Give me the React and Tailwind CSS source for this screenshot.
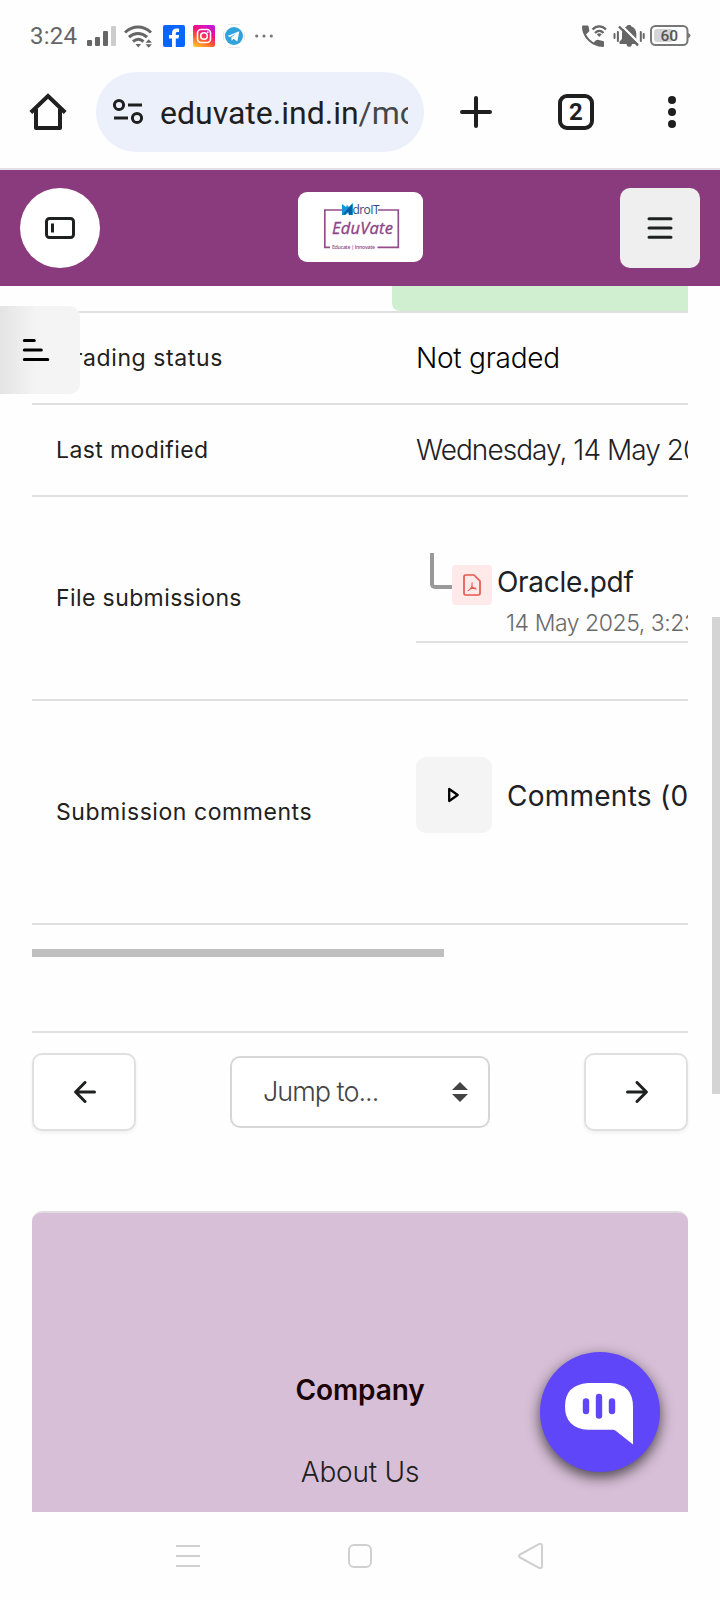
import React from "react";

const sans = "font-[Inter,'Liberation_Sans',sans-serif]";

function StatusBar() {
  return (
    <div className="flex h-[72px] shrink-0 items-center pl-[30px] pr-[29px] text-[#666]">
      <span className="w-[57px] font-[Roboto,sans-serif] text-[24px] leading-[28px] tracking-[0.2px]">3:24</span>
      <svg width="29" height="20" viewBox="0 0 29 20" fill="#666">
        <rect x="0" y="14" width="5" height="6" rx="1" />
        <rect x="8" y="11" width="5" height="9" rx="1" />
        <rect x="16" y="5" width="5" height="15" rx="1" />
        <rect x="24" y="0" width="5" height="20" rx="1" fill="#ccc" />
      </svg>
      <svg className="ml-2" width="29" height="23" viewBox="0 0 29 23" fill="none" stroke="#666" strokeWidth="3">
        <path d="M1 7.500C9 .2 19 .2 27 7.500" />
        <path d="M5 12.200c5.500-5 12.500-5 18 0" />
        <path d="M9 16.500c3.500-3 7-3 10.500 0" />
        <path d="M11.500 19h5.500l-2.700 3.500z" fill="#666" stroke="none" />
        <path d="M21.500 17.800l3.200-3.600 3.200 3.600zM21.500 19.300h6.400l-3.200 3.500z" fill="#666" stroke="none" />
      </svg>
      <svg className="ml-[10px]" width="22" height="22" viewBox="0 0 22 22">
        <rect width="22" height="22" rx="2" fill="#0866ff" />
        <path d="M9 22v-8.500H6V10h3V8.200C9 5 10.800 3.500 13.600 3.500c.9 0 1.800.1 2.500.3v3.100h-1.600c-1.300 0-1.700.5-1.700 1.500V10h3.300l-.6 3.500h-2.700V22z" fill="#fff" />
      </svg>
      <svg className="ml-2" width="22" height="22" viewBox="0 0 22 22" fill="none" stroke="#fff" strokeWidth="1.600">
        <defs>
          <linearGradient id="ig" x1="0.200" y1="1" x2="0.700" y2="0">
            <stop offset="0" stopColor="#ffc12e" />
            <stop offset="0.350" stopColor="#ff5a2c" />
            <stop offset="0.650" stopColor="#f4127f" />
            <stop offset="1" stopColor="#c814d8" />
          </linearGradient>
        </defs>
        <rect width="22" height="22" rx="2" fill="url(#ig)" stroke="none" />
        <rect x="4.500" y="4.500" width="13" height="13" rx="3.500" />
        <circle cx="11" cy="11" r="3.300" />
        <circle cx="14.800" cy="7.200" r=".9" fill="#fff" stroke="none" />
      </svg>
      <svg className="ml-2" width="22" height="24" viewBox="0 0 22 24">
        <path d="M5 .5h12M5 23.500h12M.5 8v8M21.500 8v8" stroke="#e8e8e8" strokeWidth="1" />
        <circle cx="11" cy="12" r="9" fill="#30a3dc" />
        <path d="M4.500 12l11.800-4.800-2 10.300-3.700-2.700-1.900 1.900-.4-3.200 5-4.300-6.200 3.800z" fill="#fff" />
      </svg>
      <svg className="ml-[10px]" width="18" height="6" viewBox="0 0 18 6" fill="#777">
        <circle cx="1.700" cy="3" r="1.600" />
        <circle cx="9" cy="3" r="1.600" />
        <circle cx="16.300" cy="3" r="1.600" />
      </svg>
      <svg className="ml-auto" width="26" height="24" viewBox="0 0 26 24" fill="none" stroke="#666" strokeWidth="2.200">
        <path d="M1 2.500Q1 1.500 2 1.500h4.500q1 0 1.100 1l.7 4q.1.700-.5 1.300L5 10.500q2.800 5.200 7.500 8L15.300 16q.6-.5 1.400-.3l5.300 1.200q1 .2 1 1.100v4q0 1-1 1C10 22.500 1 13 1 2.500z" fill="#666" stroke="none" />
        <path d="M11.500 5.500c4-4.200 9.500-4.200 13.500 0M14 9c2.700-2.800 6-2.800 8.500 0" />
        <path d="M15.800 10.200c1.700-1.200 3.200-1.200 4.900 0l-2.500 2.700z" fill="#666" stroke="none" />
      </svg>
      <svg className="ml-[6px]" width="32" height="24" viewBox="0 0 32 24">
        <path d="M6.500 20v-2.500L9 15V9.500c0-4 2-6 4.500-7C14.500.6 17.500.6 18.500 2.500c3 1 4.800 3.700 4.800 7V15l2.700 2.500V20h-7c-.5 3.800-5 3.800-5.500 0z" fill="#666" />
        <path d="M8.500 1.500l19 19" stroke="#fefefe" strokeWidth="2.400" />
        <path d="M6 2.500l19 19" stroke="#666" strokeWidth="2.400" />
        <path d="M1.500 10v4M4.900 8v9M27.800 8v9M30.700 10v4" stroke="#666" strokeWidth="2" strokeLinecap="round" />
      </svg>
      <svg className="ml-[5px]" width="41" height="22" viewBox="0 0 41 22">
        <rect x="4" y="4" width="19" height="13" rx="3" fill="#d5d5d5" />
        <rect x="1" y="1" width="36.500" height="19" rx="4.500" fill="none" stroke="#777" strokeWidth="2" />
        <path d="M38 8q2.500.5 2.500 2.500T38 13z" fill="#777" />
        <text x="19.300" y="16" textAnchor="middle" fontFamily="Roboto, sans-serif" fontSize="15.500" fontWeight="500" fill="#555">60</text>
      </svg>
    </div>
  );
}

function BrowserBar() {
  return (
    <div className="flex h-[98px] shrink-0 items-start border-b-2 border-[#e5dee4] pl-[28px]">
      <svg className="mt-5" width="40" height="40" viewBox="0 0 40 40" fill="none" stroke="#1f1f1f" strokeWidth="4">
        <path d="M8 17v19h24V17" strokeLinejoin="round" />
        <path d="M2.800 20.500L20 4l17.200 16.500" />
      </svg>
      <div className="ml-[28px] flex h-20 w-[328px] items-center rounded-full bg-[#ecf0fa] pl-4 pr-4">
        <svg className="shrink-0" width="32" height="28" viewBox="0 0 32 28" fill="none" stroke="#1f1f1f" strokeWidth="3">
          <circle cx="7" cy="7" r="4.600" />
          <path d="M16 7h14M2 20h14" />
          <circle cx="25" cy="20" r="4.600" />
        </svg>
        <div className="ml-4 overflow-hidden whitespace-nowrap font-[Roboto,sans-serif] text-[32px] leading-[44px] text-[#1f1f1f]">
          <span className="relative top-px">eduvate.ind.in<span className="text-[#474747]">/mod</span></span>
        </div>
      </div>
      <svg className="ml-[36px] mt-6" width="32" height="32" viewBox="0 0 32 32" stroke="#1f1f1f" strokeWidth="4" strokeLinecap="round">
        <path d="M16 2v28M2 16h28" />
      </svg>
      <div className="ml-[66px] mt-[22px] flex size-9 items-center justify-center rounded-[9px] border-4 border-[#1f1f1f] font-[Roboto,sans-serif] text-[24px] font-bold leading-none text-[#1f1f1f]">2</div>
      <svg className="ml-[74px] mt-6" width="8" height="32" viewBox="0 0 8 32" fill="#1f1f1f">
        <circle cx="4" cy="4" r="4" />
        <circle cx="4" cy="16" r="4" />
        <circle cx="4" cy="28" r="4" />
      </svg>
    </div>
  );
}

function Logo() {
  return (
    <svg width="125" height="70" viewBox="0 0 125 70">
      <path d="M45 18H26.800v37.300h5.200M80 18h20.300v37.300H79.500" fill="none" stroke="#944d8b" strokeWidth="1.700" />
      <path d="M44 12l4 3 1-2 2 2 4-4v12h-4l-1-2-3 2h-3z" fill="#1296d8" />
      <path d="M45 22l9-10v11h-3v-3h-2l-2 3z" fill="#0860a4" />
      <text x="54.500" y="22.300" fontFamily="Open Sans, sans-serif" fontSize="12" fill="#34477c" textLength="27">droIT</text>
      <text x="34" y="41.500" fontFamily="Open Sans, sans-serif" fontStyle="italic" fontSize="16.500" fill="#8f4587" stroke="#8f4587" strokeWidth=".35" textLength="61">EduVate</text>
      <text x="34" y="57" fontFamily="Open Sans, sans-serif" fontWeight="600" fontSize="5.300" fill="#944d8b" textLength="43">Educate | Innovate</text>
    </svg>
  );
}

function SiteHeader() {
  return (
    <header className="flex h-[116px] shrink-0 justify-between bg-[#8a3b7e] px-5 pt-[18px]">
      <button className="flex size-20 items-center justify-center rounded-full bg-white">
        <svg width="30" height="22" viewBox="0 0 30 22" fill="none" stroke="#1f2120" strokeWidth="3">
          <rect x="1.500" y="1.500" width="27" height="19" rx="3" />
          <path d="M7.500 6.500v9" />
        </svg>
      </button>
      <div className="mt-1 h-[70px] w-[125px] rounded-[9px] bg-white">
        <Logo />
      </div>
      <button className="flex size-20 items-center justify-center rounded-[10px] bg-[#efefef]">
        <svg width="26" height="22" viewBox="0 0 26 22" stroke="#1f2120" strokeWidth="3" strokeLinecap="round">
          <path d="M2 1.700h22M2 11h22M2 20.300h22" />
        </svg>
      </button>
    </header>
  );
}

function Row({ label, height, tracking, children }) {
  return (
    <div className={`flex border-b-2 border-[#e0e0e0] ${height}`}>
      <div className={`flex w-[384px] shrink-0 items-center whitespace-nowrap pl-6 text-[23px] text-[#1f2120] ${tracking}`}>{label}</div>
      <div className="flex min-w-0 flex-1 flex-col justify-center overflow-hidden whitespace-nowrap text-[28px] text-[#1d2125]">{children}</div>
    </div>
  );
}

function SubmissionTable() {
  return (
    <section className="flex flex-col">
      <div className="flex h-[27px] justify-end border-b-2 border-[#e0e0e0]">
        <div className="w-[296px] rounded-bl-lg bg-[#d0eed0]" />
      </div>
      <Row label="Grading status" height="h-[92px]" tracking="tracking-[0.6px]">
        <span className="font-light tracking-[-0.25px] text-black">Not graded</span>
      </Row>
      <Row label="Last modified" height="h-[92px]" tracking="tracking-[0.4px]">
        <span className="font-light tracking-[-0.95px]">Wednesday, 14 May 2025, 3:23 PM</span>
      </Row>
      <Row label="File submissions" height="h-[204px]" tracking="tracking-[0.4px]">
        <div className="flex h-[90px] border-b-2 border-[#e0e0e0]">
          <div className="ml-[14px] h-9 w-[22px] shrink-0 rounded-bl-[5px] border-b-4 border-l-4 border-[#999]" />
          <div className="mt-3 flex size-10 shrink-0 items-center justify-center rounded bg-[#ffe9e9]">
            <svg width="18" height="22" viewBox="0 0 18 22" fill="none" stroke="#e4584f" strokeWidth="1.700" strokeLinejoin="round">
              <path d="M2.500 1h8.500L17 7v12.500Q17 21 15.500 21h-13Q1 21 1 19.500v-17Q1 1 2.500 1z" />
              <path d="M9 8.500q.8 3-1.500 6-1.500 2-2.800 2.200M8.600 11.500q1.200 3.300 5 3.500M6.500 15.200q3-1.500 6.500-1" strokeWidth="1.100" />
            </svg>
          </div>
          <div className="ml-[5px] flex flex-col">
            <span className="mt-[11px] leading-[36px] tracking-[-0.3px]">Oracle.pdf</span>
            <span className="ml-[9px] mt-[7px] text-[23px] font-light leading-[32px] tracking-[-0.45px] text-[#6a6a6a]">14 May 2025, 3:23 PM</span>
          </div>
        </div>
      </Row>
      <Row label="Submission comments" height="h-[224px]" tracking="tracking-[0.56px]">
        <div className="mb-[34px] flex items-center">
          <div className="flex size-[76px] shrink-0 items-center justify-center rounded-[10px] bg-[#f4f4f4]">
            <svg width="12" height="16" viewBox="0 0 12 16" fill="none" stroke="#000" strokeWidth="2.300" strokeLinejoin="round">
              <path d="M1.200 2v12l8.500-6z" />
            </svg>
          </div>
          <span className="ml-[15px] pt-0.5 tracking-[0.25px]">Comments (0)</span>
        </div>
      </Row>
      <div className="mt-6 h-2 w-[412px] bg-[#bfbfbf]" />
    </section>
  );
}

function Arrow({ flip }) {
  return (
    <svg className={flip ? "ml-px rotate-180" : "ml-px"} width="22" height="22" viewBox="0 0 22 22" fill="none" stroke="#1f2120" strokeWidth="3" strokeLinecap="round" strokeLinejoin="round">
      <path d="M11 1.500L1.600 11l9.400 9.500M2 11h18.500" />
    </svg>
  );
}

function ActivityNav() {
  const button = "flex h-[78px] w-[104px] items-center justify-center rounded-[10px] border-2 border-[#e0e0e0] bg-white shadow-[0_2px_4px_rgba(0,0,0,0.06)]";
  return (
    <div className="mt-[74px] flex items-center justify-between border-t-2 border-[#e0e0e0] pt-5">
      <button className={button}><Arrow /></button>
      <div className="flex h-[72px] w-[260px] items-center justify-between rounded-[10px] border-2 border-[#d6d6d6] bg-white pl-[31px] pr-5">
        <span className="whitespace-nowrap text-[27px] font-light tracking-[-1px] text-[#444]">Jump to...</span>
        <svg width="16" height="20" viewBox="0 0 16 20" fill="#444">
          <path d="M8 0l8 8H0zM0 12h16l-8 8z" />
        </svg>
      </div>
      <button className={button}><Arrow flip /></button>
    </div>
  );
}

function Footer() {
  return (
    <footer className="mt-20 flex min-h-0 flex-1 flex-col items-center overflow-hidden rounded-t-[10px] border-t-2 border-[#e0dbe0] bg-[#d7bfd7]">
      <span className="mt-[159px] text-[28px] font-semibold leading-[36px] tracking-[-0.1px] text-[#1c0306]">Company</span>
      <span className="mt-[46px] text-[28px] font-light leading-[36px] tracking-[-0.2px] text-[#1f2120]">About Us</span>
    </footer>
  );
}

function SystemNav() {
  return (
    <div className="flex h-[88px] shrink-0 items-center bg-[#fefefe] pl-[176px]">
      <svg width="24" height="24" viewBox="0 0 24 24" stroke="#d0d0d0" strokeWidth="2">
        <path d="M0 2h24M0 12h24M0 22h24" />
      </svg>
      <svg className="ml-[148px]" width="24" height="24" viewBox="0 0 24 24" fill="none" stroke="#d0d0d0" strokeWidth="2">
        <rect x="1" y="1" width="22" height="22" rx="5" />
      </svg>
      <svg className="ml-[146px]" width="26" height="28" viewBox="0 0 26 28" fill="none" stroke="#d0d0d0" strokeWidth="2" strokeLinejoin="round">
        <path d="M2 12.500L21 2.200Q24 1 24 4v20q0 3-3 1.800L2 15.500Q0 14 2 12.500z" />
      </svg>
    </div>
  );
}

export default function App() {
  return (
    <div className={`relative flex h-[1600px] w-[720px] flex-col overflow-hidden bg-[#fefefe] ${sans}`}>
      <StatusBar />
      <BrowserBar />
      <SiteHeader />
      <main className="flex min-h-0 flex-1 flex-col px-8">
        <SubmissionTable />
        <ActivityNav />
        <Footer />
      </main>
      <SystemNav />

      <button className="absolute left-0 top-[306px] flex h-[88px] w-20 items-center rounded-r-[10px] bg-linear-to-r from-[#e4e4e4] to-[#f4f4f4] to-45% pl-[22px]">
        <svg width="28" height="24" viewBox="0 0 28 24" stroke="#000" strokeWidth="3" strokeLinecap="round">
          <path d="M2.300 2.500h10M2.300 12h17M2.300 21.500h23.500" />
        </svg>
      </button>
      <div className="absolute right-0 top-[617px] h-[477px] w-2 bg-[#d4d4d4]" />
      <button className="absolute left-[540px] top-[1352px] flex size-[120px] items-center justify-center rounded-full bg-[#5f47f9] pr-0.5 pt-[3px] shadow-[0_5px_14px_rgba(0,0,0,0.65)]">
        <svg width="68" height="62" viewBox="0 0 68 62">
          <path d="M23 0h22q23 1 23 24v37.500L51 48q-1.500-1.200-3.500-1.200H23Q0 45 0 23.400T23 0z" fill="#fff" />
          <path d="M21 18.500v9.500M34 14v18.500M47 18.500v9.500" stroke="#5f47f9" strokeWidth="6.400" strokeLinecap="round" />
        </svg>
      </button>
    </div>
  );
}
